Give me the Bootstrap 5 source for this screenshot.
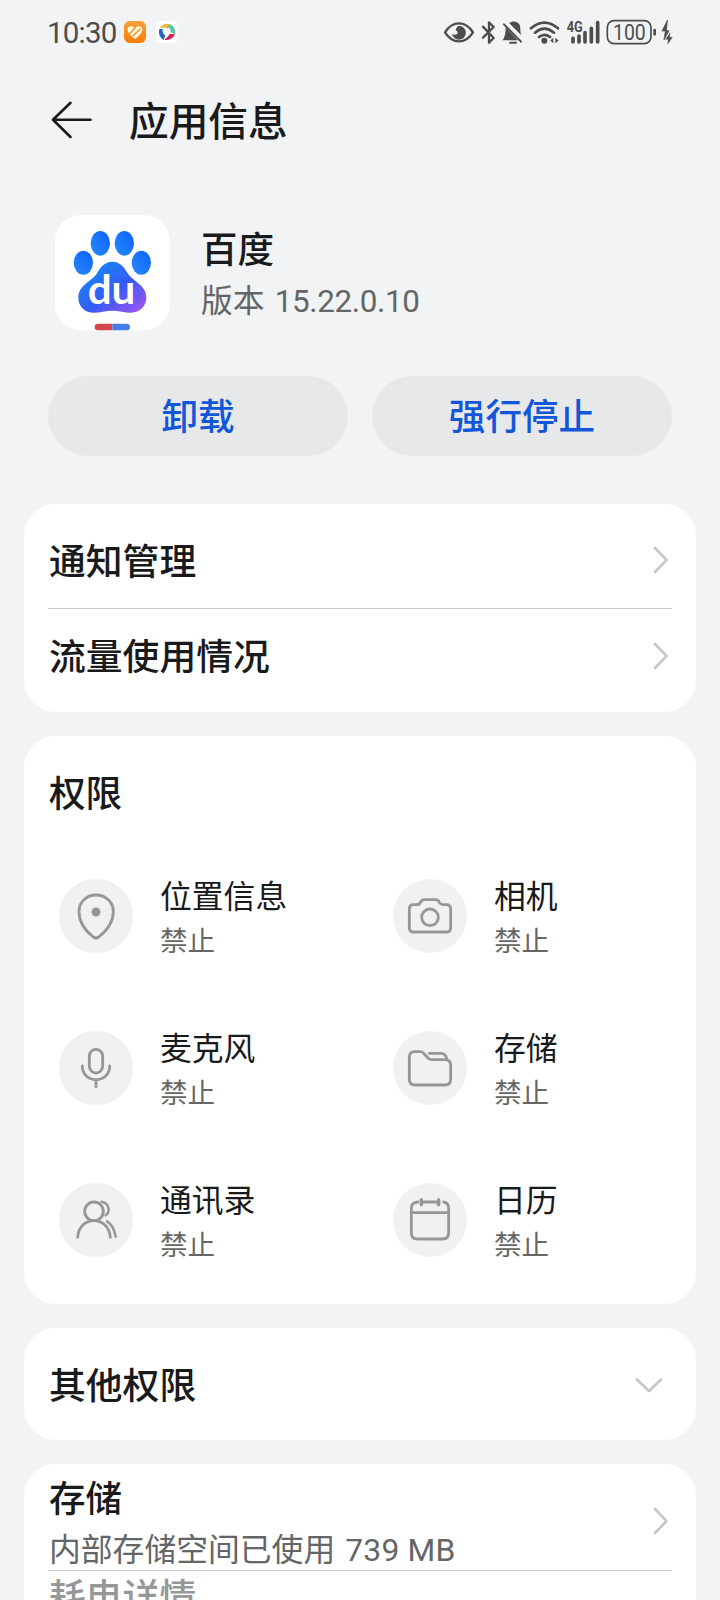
<!DOCTYPE html>
<html lang="zh-CN" data-bs-theme="light">
<head>
<meta charset="utf-8">
<meta name="viewport" content="width=device-width, initial-scale=1">
<title>应用信息</title>
<link href="https://cdn.jsdelivr.net/npm/bootstrap@5.3.0/dist/css/bootstrap.min.css" rel="stylesheet">
<style>
  body { background: #f1f3f5; color: #191a1b; font-family: "Noto Sans CJK SC", sans-serif; font-weight: 400; }
  .screen { width: 720px; height: 1600px; overflow: hidden; }
  .latin { font-family: Roboto, "Noto Sans CJK SC", sans-serif; }
  .status-bar { height: 64px; padding: 0 46px 0 47px; color: #4c4d4f; }
  .clock { font-size: 29.5px; line-height: 64px; padding-top: 2px; letter-spacing: -.8px; width: 77px; }
  .title-bar { height: 112px; padding: 0 50px; }
  .title-bar h1 { font-size: 39.7px; line-height: 60px; margin: -3px 0 0 35px; }
  .semi { font-weight: 500; }
  .app-head { height: 200px; padding: 38px 54px 0; }
  .app-icon { margin: 1px 0 0 1px; }
  .app-text { margin-left: 30px; }
  .app-name { font-size: 36.5px; line-height: 50px; margin-top: 9px; }
  .subtext { font-size: 31.8px; line-height: 50px; color: #646566; }
  .version { font-size: 31.4px; letter-spacing: -.35px; margin-left: 3px; }
  .used { letter-spacing: .2px; margin-left: 3px; }
  .pill { height: 80px; border-radius: 40px; background: #e6e8e9; color: #1257da; font-size: 36.6px; padding: 0 0 3px; line-height: 74px; border: 0; }
  .panel { margin: 0 24px 24px; border: 0; border-radius: 32px; background: #fff; padding: 0 24px; }
  .entry { height: 96px; font-size: 36.8px; line-height: 90px; padding: 0 3px 0 1px; }
  .entry span { padding-bottom: 3px; }
  .first-entry { height: 97px; }
  .second-entry { height: 95px; padding-bottom: 2px; }
  .rule { border-bottom: 1px solid #cbcccd; }
  .section-title { height: 104px; padding: 11px 0 0 1px; font-size: 36.6px; line-height: 90px; }
  .perm { height: 152px; padding-left: 11px; }
  .perm-col { width: 334px; }
  .disc { width: 74px; height: 74px; border-radius: 50%; background: #f1f1f2; margin-right: 27px; }
  .disc svg { display: block; }
  .perm-name { font-size: 31.8px; line-height: 44px; }
  .perm-state { font-size: 27.6px; line-height: 44px; padding-top: 1px; margin-bottom: -1px; color: #666; }
  .glyph { fill: none; stroke: #979797; stroke-width: 8.5; stroke-linecap: round; stroke-linejoin: round; }
  .chev { fill: none; stroke: #c6c7c8; stroke-width: 2.7; stroke-linecap: round; stroke-linejoin: round; }
  .storage { height: 107px; padding: 12px 3px 0 1px; }
  .storage svg { margin-top: -5px; }
  .storage-title { font-size: 36.6px; line-height: 50px; }
  .power { height: 29px; padding-left: 1px; font-size: 36.8px; line-height: 46px; color: #969798; }
</style>
</head>
<body>
<main class="screen">
  <header class="status-bar d-flex align-items-center">
    <span class="clock latin">10:30</span>
    <svg width="54" height="22" viewBox="282 63 162 66">
      <defs><linearGradient id="or" x2="0" y2="1"><stop stop-color="#f6a03d"/><stop offset="1" stop-color="#fa7d05"/></linearGradient></defs>
      <rect x="282" y="63" width="66" height="66" rx="17" fill="url(#or)"/>
      <path d="M315 84C304 73 290 80 293 93C295 101 307 110 315 117C325 109 337 98 337 89C336 77 322 76 315 84Z" fill="#fff8df"/>
      <path d="M299 101L317 82M308 109L331 86" stroke="#f98b18" stroke-width="4"/>
      <rect x="378" y="63" width="66" height="66" rx="15" fill="#fff"/>
      <path d="M389 85Q401 66 422 73L412 86Q401 80 389 85Z" fill="#e9b92f"/>
      <path d="M422 73Q438 83 436 103L422 97Q424 86 412 81Z" fill="#55c7a5"/>
      <path d="M388 87Q382 108 401 120L406 107Q396 100 398 87Z" fill="#2166c4"/>
      <path d="M403 119Q425 123 435 103L420 101Q414 110 403 119Z" fill="#d71f5b"/>
    </svg>
    <svg class="ms-auto" width="230" height="30" viewBox="42 50 690 90" fill="none" stroke="#4c4d4f" stroke-width="7" stroke-linecap="round" stroke-linejoin="round">
      <path d="M45 96Q62 69 87 69Q112 69 129 96Q112 123 87 123Q62 123 45 96Z"/>
      <path d="M87 76A21 21 0 1 1 66 101Q76 106 82 100Q85 94 77 88Q80 78 87 76Z" fill="#4c4d4f" stroke="none"/>
      <path d="M159 79L191 113L177 127V66L191 80L159 112"/>
      <path d="M238 69C246 60 264 62 269 74C272 82 270 92 273 104ZM227 81L264 120H218C225 109 227 98 227 81Z" fill="#4c4d4f" stroke="none"/>
      <path d="M222 72L273 124M240 127H258" stroke-width="6"/>
      <path d="M303 84Q343 50 384 84M315 97Q343 73 372 97M327 110Q343 97 360 110" stroke-width="8"/>
      <circle cx="343" cy="121" r="9" fill="#4c4d4f" stroke="none"/>
      <path d="M370 112V129L361 120.500ZM376 112V129L386 120.500Z" fill="#4c4d4f" stroke="none"/>
      <path d="M429 114V125M447 107V125M465 97V125M484 84V125M503 67V125" stroke-width="11"/>
      <rect x="532" y="61" width="131" height="69" rx="20" stroke-width="5"/>
      <path d="M674 89V102" stroke-width="8"/>
      <path d="M712 60L696 92H706L702 119L717 91H710Z" fill="#4c4d4f" stroke-width="2"/>
      <path d="M720 98L707 117H715L713 132L727 111H719Z" fill="#4c4d4f" stroke-width="1"/>
      <g fill="#4c4d4f" stroke="none" font-family="Roboto, sans-serif">
        <text x="410" y="95" font-size="42" font-weight="700" textLength="48" lengthAdjust="spacingAndGlyphs">4G</text>
        <text x="549" y="119" font-size="64" textLength="98" lengthAdjust="spacingAndGlyphs">100</text>
      </g>
    </svg>
  </header>

  <nav class="title-bar d-flex align-items-center">
    <svg width="44" height="40" viewBox="0 0 44 40" fill="none" stroke="#191a1b" stroke-width="2.600" stroke-linecap="round" stroke-linejoin="round"><path d="M20.500 2.800L3 19.800L20.500 37M3 19.800H40.500"/></svg>
    <h1 class="semi">应用信息</h1>
  </nav>

  <section class="app-head d-flex align-items-start">
    <svg class="app-icon" width="116" height="116" viewBox="44 42 348 348">
      <defs>
        <linearGradient id="toe" x1="1" y1="0" x2="0" y2="1"><stop stop-color="#0d62fb"/><stop offset="1" stop-color="#288afa"/></linearGradient>
        <linearGradient id="pad" x1="0" y1="0" x2="1" y2="1"><stop offset=".15" stop-color="#1687f5"/><stop offset=".55" stop-color="#355bf5"/><stop offset=".95" stop-color="#9b54f4"/></linearGradient>
      </defs>
      <rect x="44" y="42" width="344" height="346" rx="78" fill="#fff"/>
      <g fill="url(#toe)"><ellipse cx="129" cy="185" rx="29" ry="36"/><ellipse cx="180" cy="127" rx="29" ry="37"/><ellipse cx="252" cy="127" rx="29" ry="37"/><ellipse cx="303" cy="185" rx="29" ry="36"/></g>
      <path d="M216 182C190 182 179 202 169 218C153 242 114 252 114 290C114 318 135 335 160 335C181 335 196 329 216 329C236 329 251 335 272 335C299 335 318 316 318 289C318 252 279 242 263 218C253 202 242 182 216 182Z" fill="url(#pad)"/>
      <text x="142" y="309" font-family="Lato, sans-serif" font-weight="700" font-size="118" fill="#fff" textLength="143" lengthAdjust="spacingAndGlyphs">du</text>
      <path d="M216 368H173a10 10 0 0 0 0 20H216Z" fill="#d4454c"/><path d="M216 368H259a10 10 0 0 1 0 20H216Z" fill="#477de6"/>
    </svg>
    <div class="app-text">
      <div class="app-name semi">百度</div>
      <div class="subtext">版本 <span class="latin version">15.22.0.10</span></div>
    </div>
  </section>

  <div class="d-flex gap-4 px-5 mb-5">
    <button class="btn pill semi flex-fill w-50">卸载</button>
    <button class="btn pill semi flex-fill w-50">强行停止</button>
  </div>

  <section class="panel py-2">
    <div class="entry first-entry semi rule d-flex align-items-center justify-content-between"><span>通知管理</span>
      <svg class="chev" width="16" height="28" viewBox="0 0 16 28"><path d="M2 2L13.500 14L2 26"/></svg></div>
    <div class="entry second-entry semi d-flex align-items-center justify-content-between"><span>流量使用情况</span>
      <svg class="chev" width="16" height="28" viewBox="0 0 16 28"><path d="M2 2L13.500 14L2 26"/></svg></div>
  </section>

  <section class="panel pb-2">
    <h2 class="section-title semi m-0">权限</h2>
    <div class="row g-0">
      <div class="col-auto perm-col">
        <div class="perm d-flex align-items-center">
          <span class="disc"><svg class="glyph" width="74" height="74" viewBox="147 447 222 222"><path d="M258 495C229 495 207 517 207 545C207 578 230 605 250 621Q258 627 266 621C286 605 310 578 310 545C310 517 287 495 258 495Z"/><circle cx="258" cy="546" r="13.500" fill="#979797" stroke="none"/></svg></span>
          <div><div class="perm-name">位置信息</div><div class="perm-state">禁止</div></div>
        </div>
        <div class="perm d-flex align-items-center">
          <span class="disc"><svg class="glyph" width="74" height="74" viewBox="57 63 222 222"><rect x="148" y="118" width="40" height="71" rx="20"/><path d="M127 168C127 223 209 223 209 168M168 210V230"/></svg></span>
          <div><div class="perm-name">麦克风</div><div class="perm-state">禁止</div></div>
        </div>
        <div class="perm d-flex align-items-center">
          <span class="disc"><svg class="glyph" width="74" height="74" viewBox="57 519 222 222"><circle cx="162" cy="604" r="28"/><path d="M113 682C117 615 206 615 211 682"/><path d="M185 575C210 580 210 607 197 616M201 634Q222 647 227 680" stroke-width="7.500"/></svg></span>
          <div><div class="perm-name">通讯录</div><div class="perm-state">禁止</div></div>
        </div>
      </div>
      <div class="col">
        <div class="perm d-flex align-items-center">
          <span class="disc"><svg class="glyph" width="74" height="74" viewBox="69 56 222 222"><path d="M130 133H140Q148 133 151 126Q155 118 164 118H197Q205 118 208 126Q212 133 220 133H229Q242 133 242 146V202Q242 215 229 215H131Q118 215 118 202V146Q118 133 130 133Z"/><circle cx="180" cy="171" r="25"/></svg></span>
          <div><div class="perm-name">相机</div><div class="perm-state">禁止</div></div>
        </div>
        <div class="perm d-flex align-items-center">
          <span class="disc"><svg class="glyph" width="74" height="74" viewBox="69 512 222 222"><path d="M134 574H151Q157 574 162 580L174 593Q179 598 185 598H224Q242 598 242 615V657Q242 674 225 674H135Q118 674 118 657V591Q118 574 134 574Z"/><path d="M178 579H214Q226 579 230 594"/></svg></span>
          <div><div class="perm-name">存储</div><div class="perm-state">禁止</div></div>
        </div>
        <div class="perm d-flex align-items-center">
          <span class="disc"><svg class="glyph" width="74" height="74" viewBox="69 68 222 222"><path d="M144 125Q124 126 124 144V217Q124 236 143 236H217Q236 236 236 217V144Q236 128 221 125M154 125H206M125 157H235"/><path d="M154 118V133M206 118V133" stroke-width="10"/></svg></span>
          <div><div class="perm-name">日历</div><div class="perm-state">禁止</div></div>
        </div>
      </div>
    </div>
  </section>

  <section class="panel py-2">
    <div class="entry semi d-flex align-items-center justify-content-between pe-2"><span>其他权限</span>
      <svg class="chev mt-1" width="30" height="16" viewBox="0 0 30 16"><path d="M3 1.500L15 13L27 1.500"/></svg></div>
  </section>

  <section class="panel rounded-bottom-0 mb-0">
    <div class="storage rule d-flex align-items-center justify-content-between">
      <div><div class="storage-title semi">存储</div><div class="subtext">内部存储空间已使用 <span class="latin used">739 MB</span></div></div>
      <svg class="chev" width="16" height="28" viewBox="0 0 16 28"><path d="M2 2L13.500 14L2 26"/></svg>
    </div>
    <div class="power semi">耗电详情</div>
  </section>
</main>
<script src="https://cdn.jsdelivr.net/npm/bootstrap@5.3.0/dist/js/bootstrap.bundle.min.js"></script>
</body>
</html>
